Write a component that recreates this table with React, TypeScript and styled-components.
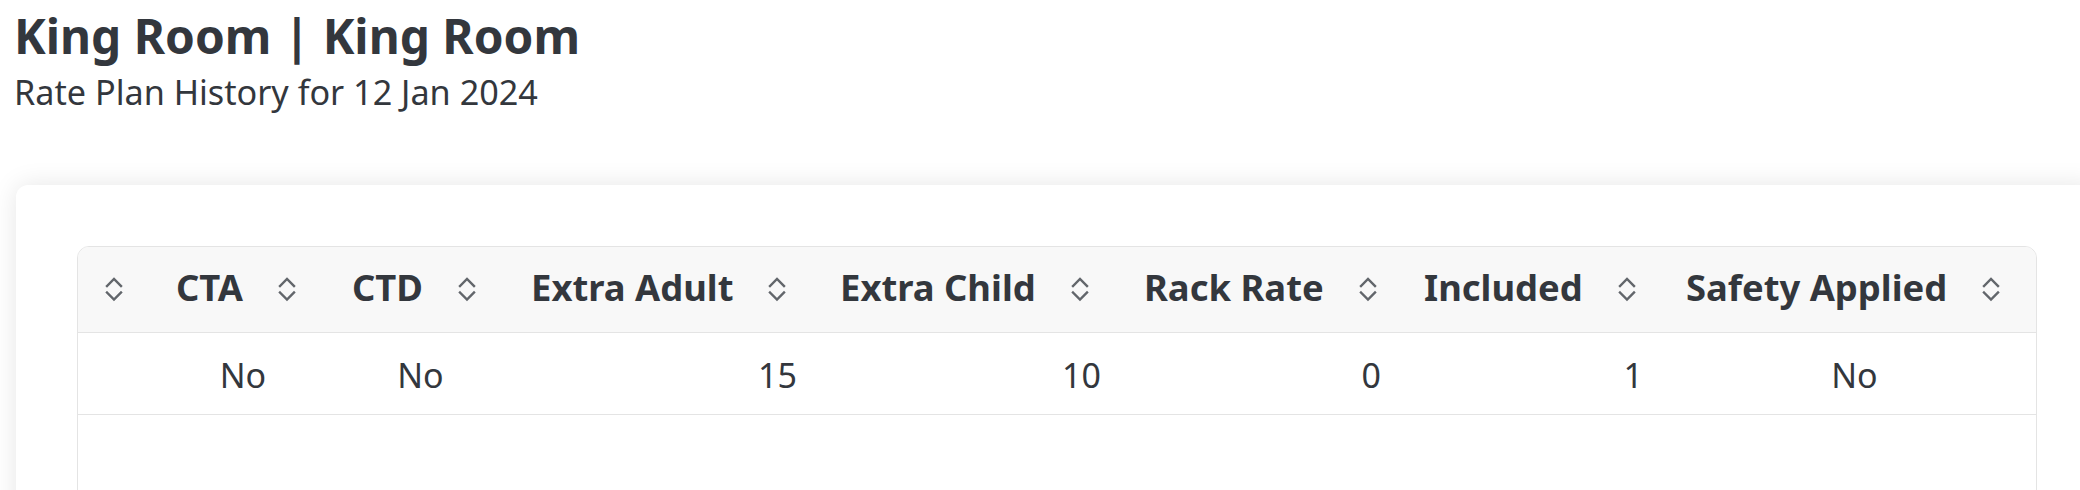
import React from "react";
import styled, { createGlobalStyle } from "styled-components";

const GlobalStyle = createGlobalStyle`
  html, body { margin: 0; padding: 0; background: #ffffff; overflow: hidden; }
  body { font-family: "Noto Sans", "Open Sans", sans-serif; color: #343a40; }
`;

const Page = styled.div`
  width: 100vw;
  height: 100vh;
  padding: 7px 0 0 16px;
  box-sizing: border-box;
  overflow: hidden;
`;

const Header = styled.header`
  margin-left: -2px;
`;

const Title = styled.h1`
  margin: 0;
  font-size: 47.8px;
  line-height: 57px;
  font-weight: 700;
  color: #33373d;
`;

const Subtitle = styled.p`
  margin: 7px 0 0;
  font-size: 34.2px;
  line-height: 41px;
  font-weight: 400;
  color: #33373d;
`;

const Card = styled.section`
  margin-top: 73px;
  width: 2082px;
  padding: 61px;
  box-sizing: border-box;
  background: #ffffff;
  border-radius: 12px;
  box-shadow: 0 0 26px rgba(0, 0, 0, 0.1);
`;

const TableFrame = styled.div`
  width: 1960px;
  min-height: 420px;
  box-sizing: border-box;
  border: 1px solid #e4e4e4;
  border-radius: 12px;
  overflow: hidden;
`;

const Table = styled.table`
  width: 100%;
  table-layout: fixed;
  border-collapse: collapse;
`;

const HeadRow = styled.tr`
  background: #f8f8f8;
  border-bottom: 1px solid #e4e4e4;
`;

const Th = styled.th<{ $first?: boolean }>`
  padding: 16px 0 20px ${(p) => (p.$first ? "27px" : "29px")};
  text-align: left;
  font-size: 36.4px;
  line-height: 49px;
  font-weight: 700;
  color: #33373d;
  white-space: nowrap;
`;

const ThInner = styled.span`
  display: flex;
  align-items: center;
  gap: 35px;
`;

const SortIcon = styled.svg`
  flex: none;
  width: 18px;
  height: 26px;
  margin-top: 2px;
`;

const BodyRow = styled.tr`
  border-bottom: 1px solid #e4e4e4;
`;

const Td = styled.td<{ $align: "right" | "center" }>`
  padding: ${(p) => (p.$align === "center" ? "19px 14px 16px 30px" : "19px 14px 16px 0")};
  text-align: ${(p) => p.$align};
  font-size: 34px;
  line-height: 46px;
  font-weight: 400;
  color: #33373d;
  white-space: nowrap;
`;

const Sort = () => (
  <SortIcon viewBox="0 0 18 26" fill="none" stroke="#62666b" strokeWidth="2.4" strokeLinecap="square">
    <polyline points="2,10 9,3 16,10" />
    <polyline points="2,16.5 9,23.5 16,16.5" />
  </SortIcon>
);

type Col = { title: string; width: number; value: string; align: "right" | "center" };

const columns: Col[] = [
  { title: "", width: 69, value: "", align: "right" },
  { title: "CTA", width: 176, value: "No", align: "center" },
  { title: "CTD", width: 179, value: "No", align: "center" },
  { title: "Extra Adult", width: 309, value: "15", align: "right" },
  { title: "Extra Child", width: 304, value: "10", align: "right" },
  { title: "Rack Rate", width: 280, value: "0", align: "right" },
  { title: "Included", width: 262, value: "1", align: "right" },
  { title: "Safety Applied", width: 379, value: "No", align: "center" },
];

export default function App() {
  return (
    <>
      <GlobalStyle />
      <Page>
        <Header>
          <Title>King Room | King Room</Title>
          <Subtitle>Rate Plan History for 12 Jan 2024</Subtitle>
        </Header>
        <Card>
          <TableFrame>
            <Table>
              <colgroup>
                {columns.map((c, i) => (
                  <col key={i} style={{ width: c.width }} />
                ))}
              </colgroup>
              <thead>
                <HeadRow>
                  {columns.map((c, i) => (
                    <Th key={i} $first={i === 0}>
                      <ThInner>
                        {c.title && <span>{c.title}</span>}
                        <Sort />
                      </ThInner>
                    </Th>
                  ))}
                </HeadRow>
              </thead>
              <tbody>
                <BodyRow>
                  {columns.map((c, i) => (
                    <Td key={i} $align={c.align}>
                      {c.value}
                    </Td>
                  ))}
                </BodyRow>
              </tbody>
            </Table>
          </TableFrame>
        </Card>
      </Page>
    </>
  );
}
